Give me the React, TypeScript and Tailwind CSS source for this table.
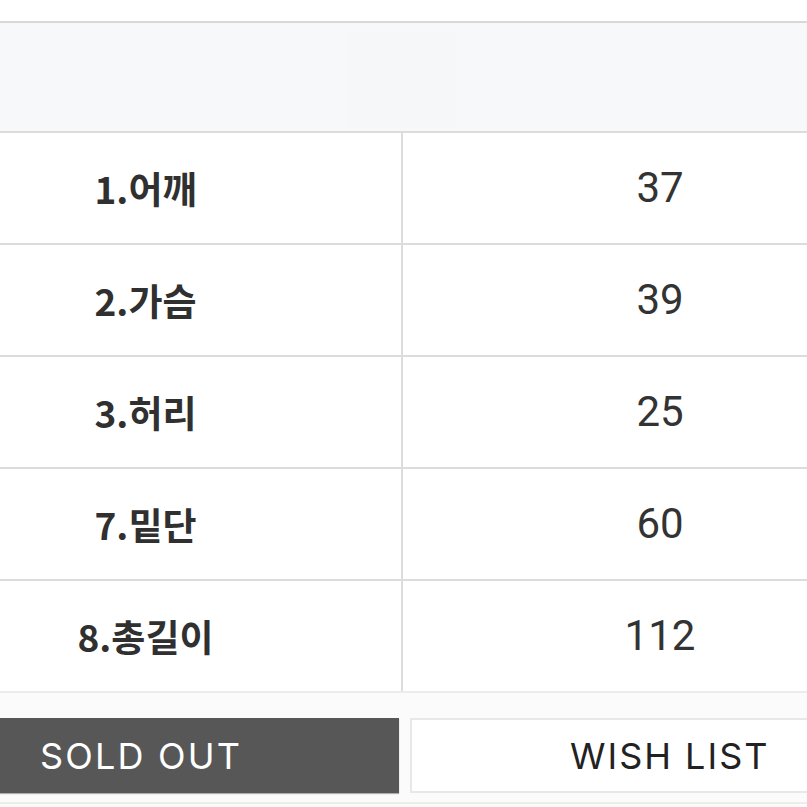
const rows = [
  { label: '1.어깨', value: '37' },
  { label: '2.가슴', value: '39' },
  { label: '3.허리', value: '25' },
  { label: '7.밑단', value: '60' },
  { label: '8.총길이', value: '112' },
];

export default function App() {
  return (
    <div className="w-[807px] h-[807px] overflow-hidden bg-white flex flex-col">
      <div className="h-[21px] shrink-0 bg-white" />

      {/* image strip */}
      <div className="h-[110px] shrink-0 border-t-2 border-[#d8d8d8] bg-[#f7f8fa] flex">
        <div className="ml-[348px] mt-[8px] w-[108px] h-[96px] bg-[#f5f7f9]" />
      </div>

      {/* size table */}
      <div className="flex flex-col shrink-0">
        {rows.map((r) => (
          <div
            key={r.label}
            className="h-[112px] border-t-2 border-[#dcdcdc] grid grid-cols-[403px_1fr]"
          >
            <div className="border-r-2 border-[#dcdcdc] flex items-center justify-center pr-[110px]">
              <span className="text-[37px] font-bold text-[#303030] font-['Noto_Sans_CJK_KR',sans-serif] leading-none">
                {r.label}
              </span>
            </div>
            <div className="flex items-center justify-center pl-[110px]">
              <span className="text-[42px] text-[#333] font-['Roboto',sans-serif] leading-none">
                {r.value}
              </span>
            </div>
          </div>
        ))}
      </div>

      {/* buttons */}
      <div className="flex-1 border-t-2 border-[#ececec] bg-[#fbfbfb] pt-[25px]">
        <div className="flex gap-[11px] h-[75px]">
          <div className="w-[399px] bg-[#575757] flex items-center pl-[40px] shadow-[0_1px_1px_rgba(0,0,0,0.3)]">
            <span className="text-white text-[36px] tracking-[2.2px] font-['Inter',sans-serif] leading-none">
              SOLD OUT
            </span>
          </div>
          <div className="flex-1 bg-white border-2 border-[#e8e8e8] border-r-0 flex items-center pl-[158px]">
            <span className="text-[#222] text-[36px] tracking-[2px] font-['Inter',sans-serif] leading-none">
              WISH LIST
            </span>
          </div>
        </div>
        <div className="mt-[9px] border-t-2 border-[#ededed]" />
      </div>
    </div>
  );
}
